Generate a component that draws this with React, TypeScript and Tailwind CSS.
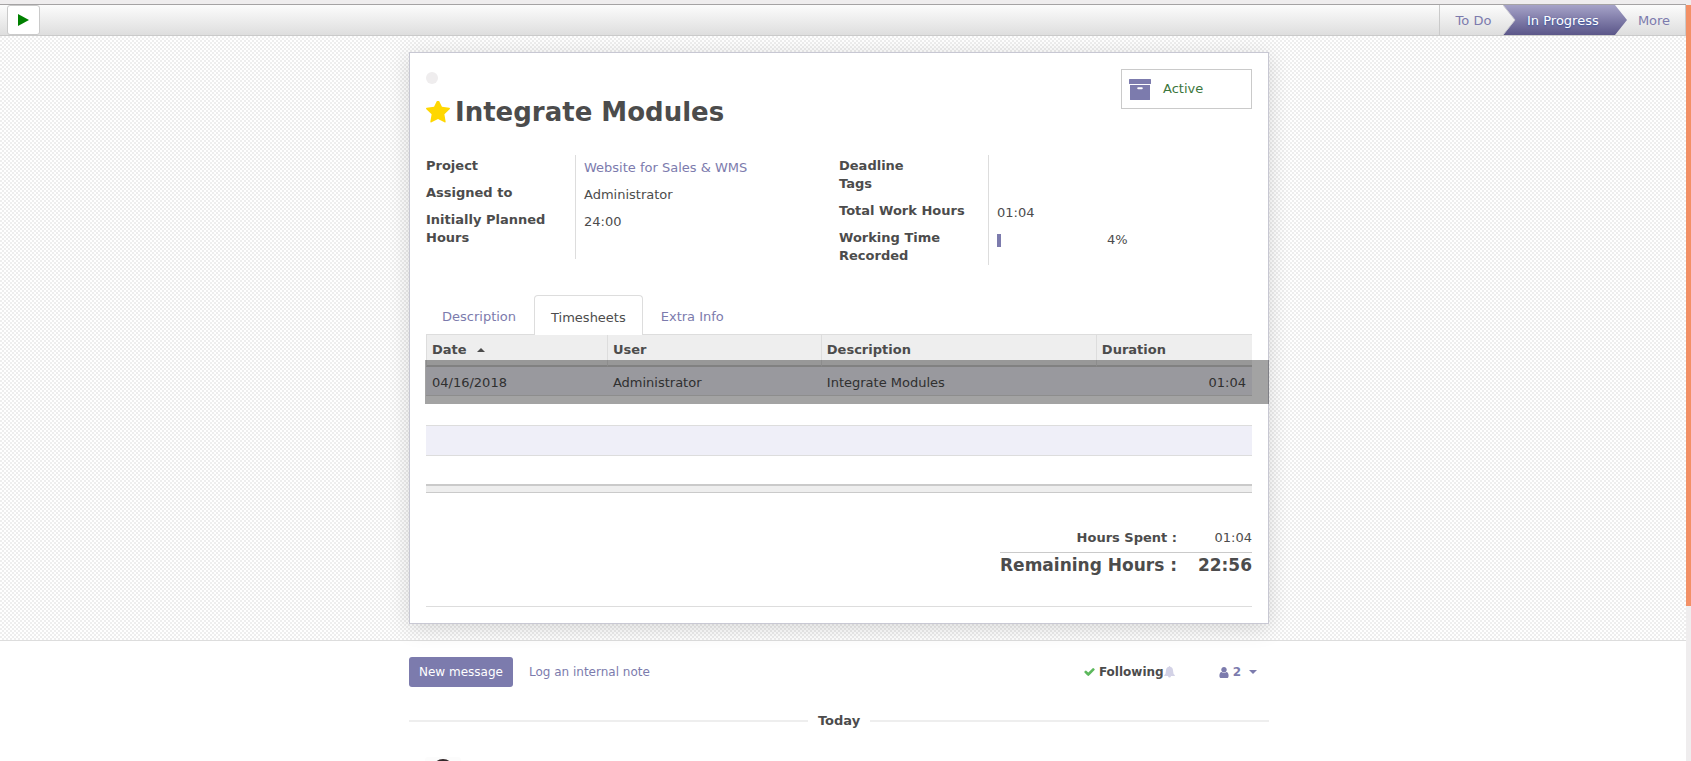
import React from "react";

type Field = { label: string; value?: React.ReactNode; compact?: boolean };

const leftFields: Field[] = [
  {
    label: "Project",
    value: (
      <a href="#project" className="text-[#7c7bad]">
        Website for Sales &amp; WMS
      </a>
    ),
  },
  { label: "Assigned to", value: "Administrator" },
  { label: "Initially Planned Hours", value: "24:00" },
];

const rightFields: Field[] = [
  { label: "Deadline", compact: true },
  { label: "Tags" },
  { label: "Total Work Hours", value: "01:04" },
  { label: "Working Time Recorded", value: <Progress percent={4} /> },
];

function Progress({ percent }: { percent: number }) {
  return (
    <span className="flex items-center">
      <span className="w-[110px]">
        <span className="block h-[13px] bg-[#7c7bad]" style={{ width: `${percent}%` }} />
      </span>
      <span>{percent}%</span>
    </span>
  );
}

function FieldGroup({ fields, className }: { fields: Field[]; className: string }) {
  return (
    <dl className={className}>
      {fields.map((f) => (
        <div key={f.label} className={f.compact ? "flex h-[18px]" : "flex min-h-[27px] last:grow"}>
          <dt className="w-[149px] shrink-0 pt-0.5 pr-4 leading-[18px] font-bold">{f.label}</dt>
          <dd className="grow border-l border-[#ddd] pt-1 pl-2 leading-[18px]">{f.value}</dd>
        </div>
      ))}
    </dl>
  );
}

function StarIcon() {
  return (
    <svg viewBox="64 128 1664 1664" className="mt-0.5 size-6 shrink-0 fill-[#ffd700]" aria-hidden="true">
      <path d="M1728 647q0 22-26 48l-363 354 86 500q1 7 1 20 0 21-10.5 35.5t-30.5 14.5q-19 0-40-12l-449-236-449 236q-22 12-40 12-21 0-31.5-14.5t-10.5-35.5q0-6 2-20l86-500-364-354q-25-27-25-48 0-37 56-46l502-73 225-455q19-41 49-41t49 41l225 455 502 73q56 9 56 46z" />
    </svg>
  );
}

function ArchiveIcon() {
  return (
    <svg viewBox="0 0 22 21" className="h-[21px] w-[22px] fill-[#7c7bad]" aria-hidden="true">
      <path d="M.5 0h21q.5 0 .5.5v4q0 .5-.5.5H.5Q0 5 0 4.500V.5Q0 0 .5 0z" />
      <path
        fillRule="evenodd"
        d="M1 6h20v14.500q0 .5-.5.5H1.500q-.5 0-.5-.5zM9.200 8.300a.9.9 0 0 0 0 2h3.600a.9.9 0 0 0 0-2z"
      />
    </svg>
  );
}

function CheckIcon() {
  return (
    <svg viewBox="121 334 1550 1188" className="h-2 w-[11px] fill-[#5cb85c]" aria-hidden="true">
      <path d="M1671 566q0 40-28 68l-724 724-136 136q-28 28-68 28t-68-28l-136-136-362-362q-28-28-28-68t28-68l136-136q28-28 68-28t68 28l294 295 656-657q28-28 68-28t68 28l136 136q28 28 28 68z" />
    </svg>
  );
}

function BellIcon() {
  return (
    <svg viewBox="0 0 11 12" className="h-3 w-[11px] fill-[#d3d2e6]" aria-hidden="true">
      <path d="M5.500 0q.7 0 .7.8Q9 1.500 9 4.600 9 8.300 11 9.300q0 .8-.8.8H7q-.2 1.500-1.500 1.500T4 10.100H.8q-.8 0-.8-.8 2-1 2-4.700 0-3.100 2.800-3.800Q4.800 0 5.500 0z" />
    </svg>
  );
}

function UserIcon() {
  return (
    <svg viewBox="0 128 1280 1536" className="h-[11px] w-[10px] fill-[#7c7bad]" aria-hidden="true">
      <path d="M1280 1399q0 109-62.500 187t-150.500 78h-854q-88 0-150.500-78t-62.500-187q0-85 8.500-160.500t31.500-152 58.500-131 94-89 134.500-34.500q131 128 313 128t313-128q76 0 134.500 34.500t94 89 58.500 131 31.500 152 8.500 160.500zm-256-887q0 159-112.500 271.500t-271.500 112.500-271.500-112.500-112.500-271.500 112.500-271.500 271.500-112.500 271.500 112.500 112.500 271.500z" />
    </svg>
  );
}

function StatusBar() {
  return (
    <header className="flex h-8 items-stretch justify-between border-t border-b border-t-[#a5a3a4] border-b-[#cacaca] bg-linear-to-b from-[#fcfcfc] to-[#dedede]">
      <button
        type="button"
        aria-label="Start"
        className="ml-[7px] flex w-[33px] items-center justify-center rounded-[3px] border border-[#cacaca] bg-white"
      >
        <svg viewBox="0 0 11 12" className="h-3 w-[11px] fill-[#008000]" aria-hidden="true">
          <path d="M0 0l11 6-11 6z" />
        </svg>
      </button>
      <nav className="flex items-stretch border-r border-l border-[#cacaca] text-[#7c7bad]">
        <button type="button" className="w-[63px] pt-0.5 pl-1">
          To Do
        </button>
        <button
          type="button"
          aria-current="step"
          className="relative flex w-[124px] items-center bg-linear-to-b from-[#a6a3c8] to-[#5b5689] pt-0.5 pl-6 text-white [clip-path:polygon(0_0,112px_0,100%_50%,112px_100%,0_100%)] [text-shadow:0_1px_2px_#2f4f9f]"
        >
          In Progress
          <svg viewBox="0 0 13 30" className="absolute inset-y-0 left-0 h-full w-[13px]" aria-hidden="true">
            <defs>
              <linearGradient id="step-tip" x1="0" y1="0" x2="0" y2="1">
                <stop offset="0" stopColor="#fcfcfc" />
                <stop offset="1" stopColor="#dedede" />
              </linearGradient>
            </defs>
            <path d="M0 0l12 15-12 15z" fill="url(#step-tip)" />
            <path d="M0 0l12 15-12 15" fill="none" stroke="#c9c8d0" />
          </svg>
        </button>
        <button type="button" className="w-[58px] pt-0.5 pr-1">
          More
        </button>
      </nav>
    </header>
  );
}

const headCell = "h-8 border-b-2 border-l border-b-[#cacaca] border-l-[#ddd] px-[5px] text-left font-bold";
const bodyCell = "h-[29px] border-b border-[#ddd] px-1.5 pt-[3px]";

function Timesheets() {
  return (
    <div className="relative">
      <table className="w-full table-fixed border-separate border-spacing-0">
        <colgroup>
          <col className="w-[21.9%]" />
          <col className="w-[25.9%]" />
          <col className="w-[33.3%]" />
          <col className="w-[18.9%]" />
        </colgroup>
        <thead className="bg-[#eee]">
          <tr>
            <th className={headCell}>
              <span className="flex items-center gap-2.5">
                Date
                <svg viewBox="0 0 8 4" className="h-1 w-2 fill-[#4c4c4c]" aria-hidden="true">
                  <path d="M4 0l4 4H0z" />
                </svg>
              </span>
            </th>
            <th className={headCell}>User</th>
            <th className={headCell}>Description</th>
            <th className={headCell}>Duration</th>
          </tr>
        </thead>
        <tbody>
          <tr className="bg-[#efeff8]">
            <td className={bodyCell}>04/16/2018</td>
            <td className={bodyCell}>Administrator</td>
            <td className={bodyCell}>Integrate Modules</td>
            <td className={bodyCell + " text-right"}>01:04</td>
          </tr>
          <tr>
            <td colSpan={4} className="h-[30px] border-b border-[#ddd]" />
          </tr>
          <tr className="bg-[#efeff8]">
            <td colSpan={4} className="h-[30px] border-b border-[#ddd]" />
          </tr>
          <tr>
            <td colSpan={4} className="h-7" />
          </tr>
        </tbody>
        <tfoot className="bg-[#eee]">
          <tr>
            <td colSpan={4} className="h-[9px] border-t-2 border-b border-[#cacaca]" />
          </tr>
        </tfoot>
      </table>
      <div className="pointer-events-none absolute top-[25px] -right-[17px] -left-px h-11 bg-black/36" />
    </div>
  );
}

function Sheet() {
  return (
    <main className="mx-auto w-full max-w-[860px] border border-[#c8c8d3] bg-white p-4 shadow-[0_4px_20px_rgba(0,0,0,0.15)]">
      <div className="flex items-start justify-between">
        <div className="pt-[3px]">
          <button type="button" aria-label="Kanban state" className="block size-3 rounded-full bg-[#efedee]" />
          <h1 className="mt-2.5 flex items-center gap-[5px] text-[26px] leading-9 font-bold">
            <StarIcon />
            Integrate Modules
          </h1>
        </div>
        <button
          type="button"
          className="flex h-10 w-[131px] items-center gap-3 border border-[#cacaca] bg-white pl-[7px] text-[#3c763d]"
        >
          <ArchiveIcon />
          Active
        </button>
      </div>

      <div className="mt-[25px] grid grid-cols-2 items-start">
        <FieldGroup fields={leftFields} className="flex min-h-[104px] flex-col" />
        <FieldGroup fields={rightFields} className="flex min-h-[110px] flex-col" />
      </div>

      <div role="tablist" className="mt-[30px] flex gap-0.5 border-b border-[#ddd]">
        <button type="button" role="tab" className="h-[39px] px-4 pt-1 text-[#7c7bad]">
          Description
        </button>
        <button
          type="button"
          role="tab"
          aria-selected="true"
          className="-mb-px h-10 rounded-t-[4px] border border-b-0 border-[#ddd] bg-white px-4 pt-1"
        >
          Timesheets
        </button>
        <button type="button" role="tab" className="h-[39px] px-4 pt-1 text-[#7c7bad]">
          Extra Info
        </button>
      </div>
      <Timesheets />

      <dl className="mt-9 ml-auto w-fit text-right">
        <div className="flex justify-end border-b border-[#cacaca] pb-[5px] leading-[18px]">
          <dt className="font-bold">Hours Spent :</dt>
          <dd className="w-[75px]">01:04</dd>
        </div>
        <div className="flex justify-end text-[17px] leading-6 font-bold">
          <dt>Remaining Hours :</dt>
          <dd className="w-[75px]">22:56</dd>
        </div>
      </dl>
      <hr className="mt-[29px] border-[#ddd]" />
    </main>
  );
}

function Chatter() {
  return (
    <section className="mx-auto w-full max-w-[860px] pt-4">
      <div className="flex items-center justify-between">
        <div className="flex items-center gap-4 text-[12px]">
          <button type="button" className="h-[30px] rounded-[3px] bg-[#7c7bad] px-2.5 text-white">
            New message
          </button>
          <button type="button" className="text-[#7c7bad]">
            Log an internal note
          </button>
        </div>
        <div className="flex items-center gap-11 pr-3 text-[12px] font-bold">
          <button type="button" className="flex items-center">
            <CheckIcon />
            <span className="ml-1">Following</span>
            <BellIcon />
          </button>
          <button type="button" className="flex items-center gap-1 text-[#7c7bad]">
            <UserIcon />2
            <svg viewBox="0 0 8 4" className="ml-1 h-1 w-2 fill-[#7c7bad]" aria-hidden="true">
              <path d="M0 0h8L4 4z" />
            </svg>
          </button>
        </div>
      </div>
      <div className="mt-[25px] flex items-center gap-2.5 leading-[18px] font-bold">
        <span className="h-0.5 grow bg-[#eee]" />
        Today
        <span className="h-0.5 grow bg-[#eee]" />
      </div>
      <svg viewBox="0 0 36 36" className="mt-[27px] ml-4 size-9" aria-hidden="true">
        <rect width="36" height="36" rx="3" fill="#fcfcfc" />
        <ellipse cx="18" cy="9" rx="9" ry="7" fill="#33282a" />
      </svg>
    </section>
  );
}

export default function App() {
  return (
    <div className="flex h-screen flex-col overflow-hidden bg-white font-['Verdana','DejaVu_Sans',sans-serif] text-[13px] text-[#4c4c4c]">
      <div className="h-1 shrink-0 bg-[#efedee]" />
      <div className="flex min-h-0 grow">
        <div className="min-w-0 grow overflow-hidden">
          <StatusBar />
          <div className="border-b border-[#ddd] bg-[repeating-conic-gradient(#ffffff_0_25%,#eeeeee_0_50%)] bg-[length:4px_4px] py-4 pr-2">
            <Sheet />
          </div>
          <div className="pr-2">
            <Chatter />
          </div>
        </div>
        <div className="w-[5px] shrink-0 bg-[#efedee] pt-px">
          <div className="h-[79.500%] bg-[#f39066]" />
        </div>
      </div>
    </div>
  );
}
